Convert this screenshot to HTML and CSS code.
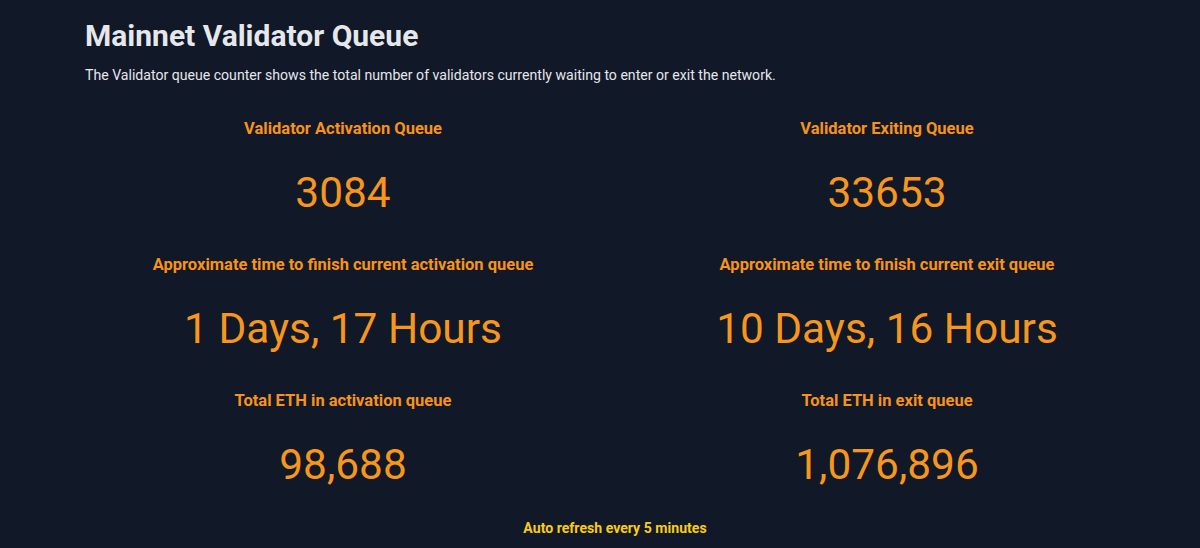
FILE: index.html
```html
<!DOCTYPE html>
<html lang="en">
<head>
  <meta charset="UTF-8" />
  <meta name="viewport" content="width=device-width, initial-scale=1.0"/>
  <title>Mainnet Validator Queue</title>
  <link rel="stylesheet" href="styles.css">
</head>
<body>

  <div class="page">
    <h1>Mainnet Validator Queue</h1>
    <p class="intro">The Validator queue counter shows the total number of validators currently waiting to enter or exit the network.</p>

    <div class="queues">
      <!-- Activation side -->
      <div class="queue">
        <div class="stat">
          <h2>Validator Activation Queue</h2>
          <p class="value">3084</p>
        </div>
        <div class="stat">
          <h2>Approximate time to finish current activation queue</h2>
          <p class="value">1 Days, 17 Hours</p>
        </div>
        <div class="stat">
          <h2>Total ETH in activation queue</h2>
          <p class="value">98,688</p>
        </div>
      </div>

      <!-- Exit side -->
      <div class="queue">
        <div class="stat">
          <h2>Validator Exiting Queue</h2>
          <p class="value">33653</p>
        </div>
        <div class="stat">
          <h2>Approximate time to finish current exit queue</h2>
          <p class="value">10 Days, 16 Hours</p>
        </div>
        <div class="stat">
          <h2>Total ETH in exit queue</h2>
          <p class="value">1,076,896</p>
        </div>
      </div>
    </div>

    <p class="refresh">Auto refresh every 5 minutes</p>
  </div>

</body>
</html>
```

FILE: styles.css
```css
body {
  margin: 0;
  font-family: Roboto, 'Liberation Sans', sans-serif;
  background-color: #111827;
  color: #e5e7eb;
}

.page {
  width: 1060px;
  padding: 18px 0 0 85px;
}

h1 {
  margin: 0 0 11px;
  font-size: 30px;
  line-height: 36px;
  font-weight: 700;
  color: #e5e7eb;
}

.intro {
  margin: 0;
  font-size: 14.1px;
  line-height: 20px;
  color: #e5e7eb;
}

.queues {
  display: grid;
  grid-template-columns: 1fr 1fr;
  gap: 28px;
  margin-top: 32px;
}

.queue {
  display: flex;
  flex-direction: column;
  align-items: center;
  text-align: center;
}

.stat {
  margin-bottom: 36px;
}

.stat:last-child {
  margin-bottom: 0;
}

.stat h2 {
  margin: 0 0 28px;
  font-size: 16.5px;
  line-height: 24px;
  font-weight: 700;
  color: #f7931a;
}

.stat .value {
  margin: 0;
  font-size: 42.4px;
  line-height: 48px;
  color: #f7961c;
}

.refresh {
  margin: 29px 0 0;
  text-align: center;
  font-size: 14.1px;
  line-height: 20px;
  font-weight: 700;
  color: #facc15;
}
```
